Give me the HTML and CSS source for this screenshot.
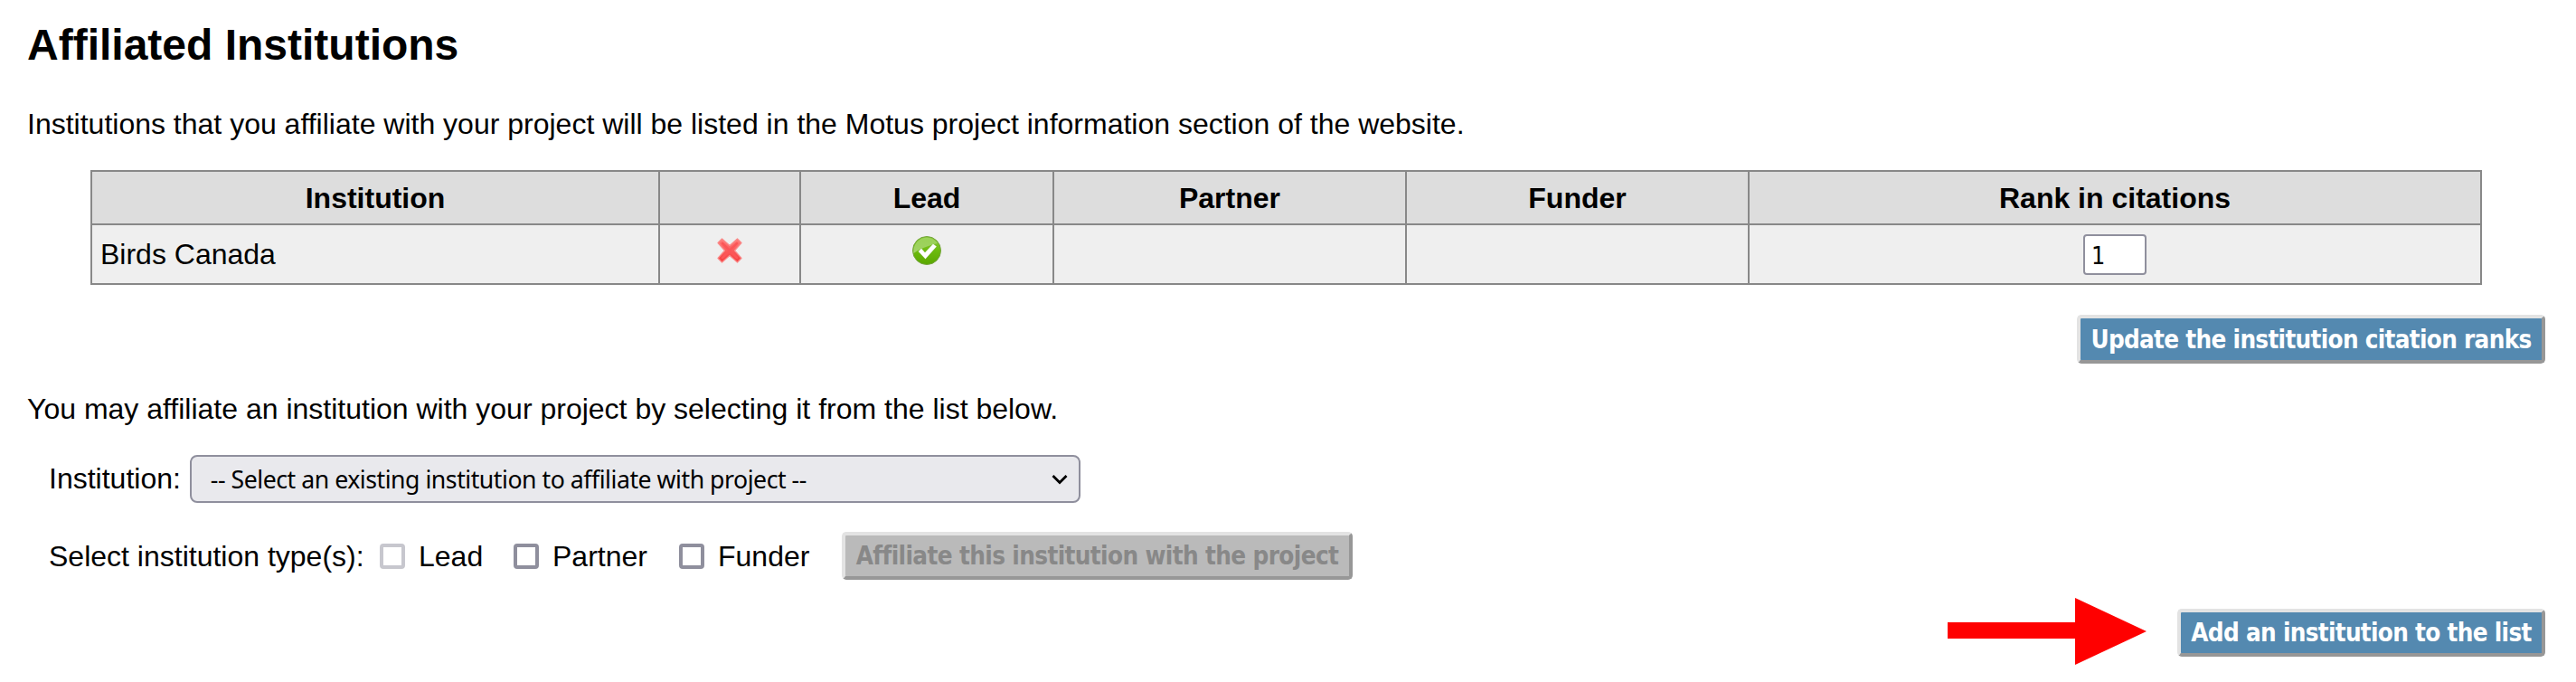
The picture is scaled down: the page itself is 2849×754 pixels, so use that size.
FILE: index.html
```html
<!DOCTYPE html>
<html lang="en">
<head>
<meta charset="utf-8">
<title>Affiliated Institutions</title>
<link rel="stylesheet" href="styles.css">
</head>
<body>
<main class="page">
  <h1 class="title">Affiliated Institutions</h1>
  <p class="intro">Institutions that you affiliate with your project will be listed in the Motus project information section of the website.</p>
  <table class="grid">
    <colgroup><col class="c-name"><col class="c-del"><col class="c-lead"><col class="c-partner"><col class="c-funder"><col class="c-rank"></colgroup>
    <thead>
      <tr><th>Institution</th><th></th><th>Lead</th><th>Partner</th><th>Funder</th><th>Rank in citations</th></tr>
    </thead>
    <tbody>
      <tr>
        <td class="name">Birds Canada</td>
        <td><svg class="icon" viewBox="0 0 32 32">
          <defs><linearGradient id="red" x1="0" y1="0" x2="0" y2="1"><stop offset="0" stop-color="#ff7e7c"/><stop offset="1" stop-color="#f53a3c"/></linearGradient></defs>
          <path d="M7.5 3 L16 10.5 L24.5 3 L29 7.5 L21.5 16 L29 24.5 L24.5 29 L16 21.5 L7.5 29 L3 24.5 L10.5 16 L3 7.5 Z" fill="url(#red)" stroke="#f98a89" stroke-width="1.2" stroke-linejoin="round"/>
          <path d="M8 8 L24 24 M24 8 L8 24" stroke="#fb5658" stroke-width="2.5" stroke-linecap="round"/>
        </svg></td>
        <td><svg class="icon" viewBox="0 0 32 32">
          <defs><linearGradient id="green" x1="0" y1="0" x2="0" y2="1"><stop offset="0" stop-color="#8ccb3f"/><stop offset=".5" stop-color="#6dbb0e"/><stop offset="1" stop-color="#5aa700"/></linearGradient>
          <linearGradient id="shine" x1="0" y1="0" x2="0" y2="1"><stop offset="0" stop-color="#fff" stop-opacity=".15"/><stop offset="1" stop-color="#fff" stop-opacity=".4"/></linearGradient></defs>
          <circle cx="16" cy="16" r="15.5" fill="url(#green)" stroke="#73a33b" stroke-width="1"/>
          <path d="M1.5 19 A14.7 14.7 0 0 1 28 8 C20 10 10 13 1.5 19 Z" fill="url(#shine)"/>
          <path d="M6.5 17 L10 13.5 L14 18 L23 8.5 L27 11.5 L14.5 25.5 Z" fill="#fff" stroke="#4c9200" stroke-opacity=".35" stroke-width=".7"/>
        </svg></td>
        <td></td><td></td>
        <td class="rank"><input class="rank-input" type="text" value="1"></td>
      </tr>
    </tbody>
  </table>
  <div class="actions"><button class="btn btn-update" type="button">Update the institution citation ranks</button></div>
  <p class="hint">You may affiliate an institution with your project by selecting it from the list below.</p>
  <div class="row row-select">
    <span class="select-label">Institution:</span>
    <div class="select" role="combobox">
      <span class="select-text">-- Select an existing institution to affiliate with project --</span>
      <svg class="chevron" viewBox="0 0 18 12"><path d="M1.5 2 L9 9.5 L16.5 2" fill="none" stroke="#000" stroke-width="2.8"/></svg>
    </div>
  </div>
  <div class="row row-types">
    <span class="types-label">Select institution type(s):</span>
    <label class="type t-lead"><input class="check" type="checkbox" disabled>Lead</label>
    <label class="type t-partner"><input class="check" type="checkbox">Partner</label>
    <label class="type t-funder"><input class="check" type="checkbox">Funder</label>
    <button class="btn btn-affiliate" type="button" disabled>Affiliate this institution with the project</button>
  </div>
  <div class="footer">
    <svg class="arrow" viewBox="0 0 220 74"><path d="M0 27 H141 V0 L220 37 L141 74 V45 H0 Z" fill="#f00"/></svg>
    <button class="btn btn-add" type="button">Add an institution to the list</button>
  </div>
</main>
</body>
</html>
```
FILE: styles.css
```css
* { box-sizing: border-box; }
body { margin: 0; background: #fff; color: #000; font: 32px/36px "Liberation Sans", Arial, sans-serif; }
.page { width: 2849px; height: 754px; padding: 23px 34px 0 30px; display: flex; flex-direction: column; overflow: hidden; white-space: nowrap; }
.title { margin: 0; font-size: 48px; line-height: 54px; height: 54px; }
.intro { margin: 42px 0 0; height: 36px; }
.grid { margin: 33px 0 0 70px; width: 2645px; border-collapse: collapse; table-layout: fixed; }
.grid th, .grid td { border: 2px solid #888; padding: 0; text-align: center; }
.grid th { background: #ddd; height: 59px; font-weight: bold; }
.grid td { background: #efefef; height: 66px; vertical-align: top; padding-top: 12px; line-height: 0; }
.grid .name { text-align: left; padding: 14px 0 0 9px; line-height: 36px; }
.grid .rank { padding-top: 10px; }
.c-name { width: 628px; }
.c-del { width: 156px; }
.c-lead { width: 280px; }
.c-partner { width: 390px; }
.c-funder { width: 379px; }
.c-rank { width: 810px; }
.icon { width: 32px; height: 32px; }
.rank-input { width: 70px; height: 45px; padding: 1px 0 0 7px; border: 2px solid #8f8f9d; border-radius: 4px; background: #fff; font: 26.67px "DejaVu Sans Condensed", "DejaVu Sans", sans-serif; color: #000; }
.actions { display: flex; justify-content: flex-end; margin-top: 33px; height: 54px; }
.btn { height: 54px; padding: 1px 0 0; border: 4px solid; border-color: #e3e3e3 #979797 #979797 #e3e3e3; border-radius: 5px; background: #5489b0; color: #fff; font: bold 27.6px/44px "DejaVu Sans Condensed", "DejaVu Sans", sans-serif; text-align: center; white-space: nowrap; letter-spacing: -0.7px; }
.btn-update { width: 518px; }
.hint { margin: 32px 0 0; height: 36px; }
.row { display: flex; align-items: center; padding-left: 24px; }
.row-select { margin-top: 33px; height: 53px; }
.select-label { padding-bottom: 1px; }
.select { width: 985px; height: 53px; margin-left: 10px; padding: 0 12px 0 21px; display: flex; align-items: center; justify-content: space-between; background: #e9e9ed; border: 2px solid #8f8f9d; border-radius: 8px; }
.select-text { font: 26.67px/44px "Noto Sans", sans-serif; letter-spacing: -0.47px; }
.chevron { width: 18px; height: 12px; }
.row-types { margin-top: 32px; height: 53px; }
.types-label { width: 366px; }
.type { display: flex; align-items: center; gap: 15px; }
.t-lead { width: 148px; }
.t-partner { width: 183px; }
.t-funder { width: 180px; }
.check { appearance: none; margin: 0; width: 28px; height: 28px; border: 4px solid #8f8f9d; border-radius: 4px; background: #fff; }
.check:disabled { border-color: #c7c7ce; }
.btn-affiliate { width: 565px; height: 53px; background: #bababa; color: #888; letter-spacing: -0.62px; }
.footer { display: flex; justify-content: flex-end; gap: 34px; margin-top: 20px; }
.arrow { width: 220px; height: 74px; }
.btn-add { width: 407px; height: 53px; margin-top: 12px; }
```
